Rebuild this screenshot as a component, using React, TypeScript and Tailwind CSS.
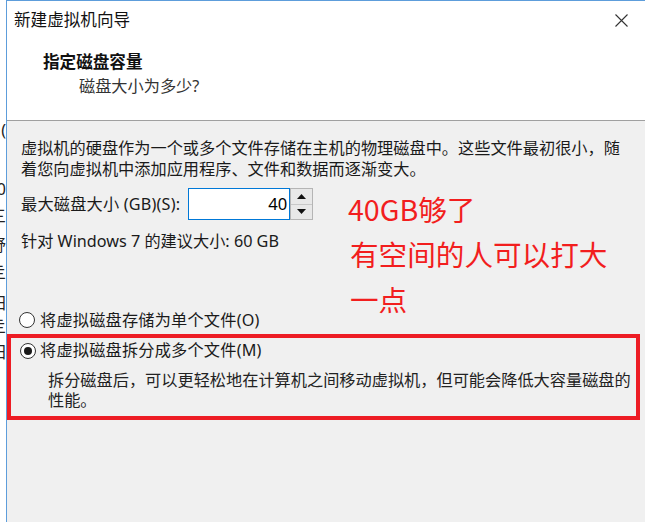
import React from "react";

function Radio({ checked }: { checked?: boolean }) {
  return (
    <span className="w-[16px] h-[16px] shrink-0 rounded-full border border-[#333333] bg-white flex items-center justify-center">
      {checked && <span className="w-[8px] h-[8px] rounded-full bg-[#1a1a1a]" />}
    </span>
  );
}

function Spinner() {
  return (
    <div className="w-[23px] h-[32px] flex flex-col border border-[#b5b5b5] bg-[#e8e8e8]">
      <button className="flex-1 flex items-center justify-center border-b border-[#c8c8c8]">
        <svg width="9" height="5" viewBox="0 0 9 5">
          <path d="M0 5 L4.5 0 L9 5 Z" fill="#111" />
        </svg>
      </button>
      <button className="flex-1 flex items-center justify-center">
        <svg width="9" height="5" viewBox="0 0 9 5">
          <path d="M0 0 L4.5 5 L9 0 Z" fill="#111" />
        </svg>
      </button>
    </div>
  );
}

export default function App() {
  return (
    <div className="w-[645px] h-[522px] flex bg-white overflow-hidden text-[#1a1a1a] font-['Noto_Sans','Noto_Sans_CJK_SC',sans-serif]">
      {/* sliver of the window behind */}
      <div className="w-[6px] shrink-0 overflow-hidden flex flex-col items-end pt-[120px] text-[16px] leading-[20px] text-[#222] whitespace-nowrap">
        <div className="h-[20px]">(</div>
        <div className="h-[20px] mt-[39px]">0</div>
        <div className="h-[20px] mt-[7px]">三</div>
        <div className="h-[20px] mt-[9px]">舒</div>
        <div className="h-[20px] mt-[7px]">亖</div>
        <div className="h-[20px] mt-[11px]">田</div>
        <div className="h-[20px] mt-[3px]">亖</div>
        <div className="h-[20px] mt-[6px]">田</div>
      </div>

      {/* wizard dialog */}
      <div className="flex-1 min-w-0 flex flex-col border-l border-t border-[#5d9ddb]">
        <div className="h-[120px] shrink-0 bg-white border-b border-[#a0a0a0] flex flex-col">
          <div className="h-[38px] flex items-center justify-between pl-[7px] pr-[17px]">
            <span className="text-[16.6px] text-[#111]">新建虚拟机向导</span>
            <svg width="13" height="13" viewBox="0 0 13 13">
              <path d="M0.5 0.5 L12.5 12.5 M12.5 0.5 L0.5 12.5" stroke="#333" strokeWidth="1.1" />
            </svg>
          </div>
          <div className="mt-[11.5px] pl-[36px] text-[16.6px] leading-[21px] font-bold text-[#111]">指定磁盘容量</div>
          <div className="mt-[4px] pl-[72px] text-[16.2px] leading-[21px] text-[#333]">磁盘大小为多少?</div>
        </div>

        <div className="flex-1 relative bg-[#f0f0f0] pt-[16.5px] text-[16.2px]">
          <p className="pl-[14px] leading-[21px] whitespace-nowrap">
            虚拟机的硬盘作为一个或多个文件存储在主机的物理磁盘中。这些文件最初很小，随
            <br />
            着您向虚拟机中添加应用程序、文件和数据而逐渐变大。
          </p>

          <div className="mt-[8.5px] pl-[14px] flex items-center">
            <span className="leading-[21px] tracking-[0.2px]">最大磁盘大小 (GB)(S):</span>
            <div className="ml-[8px] w-[102px] h-[32px] bg-white border border-[#0078d7] flex items-center justify-end pr-[2px]">
              <span className="text-[16.6px] text-[#000]">40</span>
            </div>
            <Spinner />
          </div>

          <div className="mt-[10.5px] pl-[14px] leading-[21px]">针对 Windows 7 的建议大小: 60 GB</div>

          <div className="mt-[58px] pl-[12px] flex items-center gap-[5px] leading-[21px]">
            <Radio />
            <span className="tracking-[0.2px]">将虚拟磁盘存储为单个文件(O)</span>
          </div>

          <div className="mt-[3.5px] mr-[5px] border-[4px] border-[#ed1c24] pt-[2px] pb-[6px]">
            <div className="pl-[9px] flex items-center gap-[4px] leading-[21px]">
              <Radio checked />
              <span className="tracking-[0.2px]">将虚拟磁盘拆分成多个文件(M)</span>
            </div>
            <p className="mt-[8.5px] pl-[37px] leading-[20px] whitespace-nowrap text-[#222]">
              拆分磁盘后，可以更轻松地在计算机之间移动虚拟机，但可能会降低大容量磁盘的
              <br />
              性能。
            </p>
          </div>

          {/* red annotation drawn over the screenshot */}
          <div className="absolute left-[341px] top-[64.5px] text-[28.6px] leading-[45px] text-[#f21e1e] whitespace-nowrap font-['Noto_Sans_CJK_SC',sans-serif]">
            <div>40GB够了</div>
            <div className="pl-[2px]">有空间的人可以打大</div>
            <div className="pl-[2px]">一点</div>
          </div>
        </div>
      </div>
    </div>
  );
}
